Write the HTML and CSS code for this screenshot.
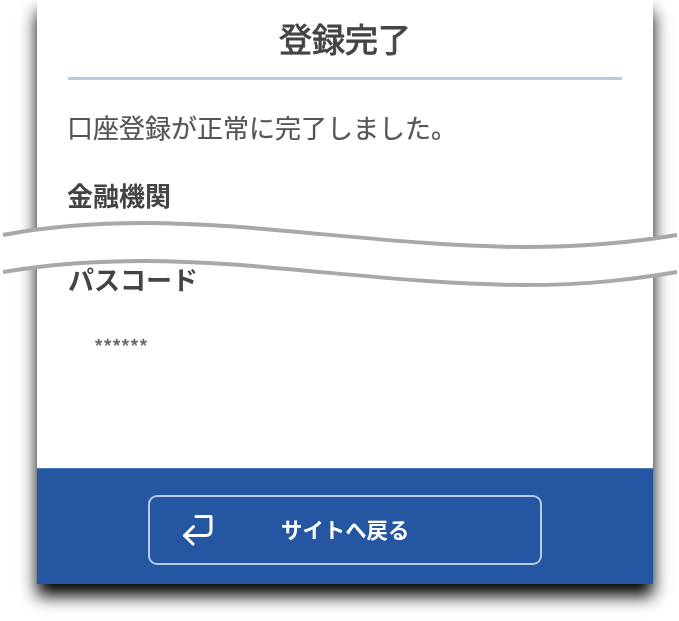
FILE: index.html
```html
<!DOCTYPE html>
<html lang="ja">
<head>
    <meta charset="UTF-8">
    <title>登録完了</title>
    <link rel="stylesheet" href="styles.css">
</head>
<body>
<div class="page">
    <div class="panel">
        <div class="content">
            <h1 class="title">登録完了</h1>
            <p class="message">口座登録が正常に完了しました。</p>
            <p class="label bank">金融機関</p>
            <p class="label passcode">パスコード</p>
            <p class="masked">******</p>
        </div>
        <div class="footer">
            <a class="backBtn" href="#">
                <svg class="backIcon" viewBox="0 0 32 32" width="32" height="32" fill="none" stroke="#fff" stroke-width="3" stroke-linecap="round" stroke-linejoin="round">
                    <path d="M14 2.5H29V16Q29 21.5 24 21.5H2.5"/>
                    <path d="M11.5 12.5L2.5 21.5L11 30"/>
                </svg>
                <span class="backText">サイトへ戻る</span>
            </a>
        </div>
    </div>
    <!-- 途中省略の波線 -->
    <svg class="cut" viewBox="0 0 679 70" width="679" height="70">
        <path class="cutFill" d="M3 15C50 6 100 3 145 3C260 3 400 27 525 27C590 27 635 22 677 15V52C635 59 590 65 525 65C400 65 260 41 145 41C100 41 50 44 3 52Z"/>
        <path class="cutLine" d="M3 15C50 6 100 3 145 3C260 3 400 27 525 27C590 27 635 22 677 15"/>
        <path class="cutLine" d="M3 52C50 44 100 41 145 41C260 41 400 65 525 65C590 65 635 59 677 52"/>
    </svg>
</div>
</body>
</html>
```

FILE: styles.css
```css
html, body, h1, p {
    margin: 0;
    padding: 0;
}

body {
    width: 679px;
    height: 621px;
    overflow: hidden;
    background: #fff;
    font-family: "Noto Sans CJK JP", "Liberation Sans", sans-serif;
    color: #4a4a4a;
}

.page {
    position: relative;
    padding-left: 37px;
}

.panel {
    width: 616px;
    height: 584px;
    display: flex;
    flex-direction: column;
    background: #fff;
    box-shadow: 0 12px 16px #000;
}

.content {
    flex: 1;
    padding: 0 31px;
    filter: blur(0.5px);
}

.title {
    height: 77px;
    line-height: 76px;
    border-bottom: 3px solid #b7cbdc;
    text-align: center;
    font-size: 33px;
    font-weight: 400;
    -webkit-text-stroke: 0.9px #444;
    color: #444;
}

.message {
    margin-top: 28px;
    margin-left: -1px;
    line-height: 38px;
    font-size: 26px;
    font-weight: 400;
    -webkit-text-stroke: 0.2px #555;
    color: #555;
}

.label {
    line-height: 36px;
    font-size: 26px;
    font-weight: 700;
    color: #444;
}

.bank {
    margin-top: 31px;
    margin-left: -1px;
}

.passcode {
    margin-top: 48px;
}

.masked {
    margin-top: 40px;
    padding-left: 26px;
    line-height: 20px;
    font-size: 20px;
    letter-spacing: -0.4px;
    -webkit-text-stroke: 0.4px #666;
    color: #666;
}

.footer {
    box-sizing: border-box;
    height: 116px;
    display: flex;
    justify-content: center;
    align-items: flex-start;
    padding-top: 26px;
    background: #2456a2;
    border-top: 1px solid #4a7cc0;
}

.backBtn {
    box-sizing: border-box;
    width: 394px;
    height: 70px;
    display: flex;
    align-items: center;
    padding-left: 32px;
    border: 2px solid #b9cbe4;
    border-radius: 9px;
    color: #fff;
    text-decoration: none;
    filter: blur(0.4px);
}

.backIcon {
    flex: none;
}

.backText {
    margin-left: 67px;
    margin-bottom: 3px;
    font-size: 21.4px;
    font-weight: 700;
}

.cut {
    position: absolute;
    left: 0;
    top: 220px;
}

.cutFill {
    fill: #fff;
}

.cutLine {
    fill: none;
    stroke: #a8a8a8;
    stroke-width: 4;
}
```
